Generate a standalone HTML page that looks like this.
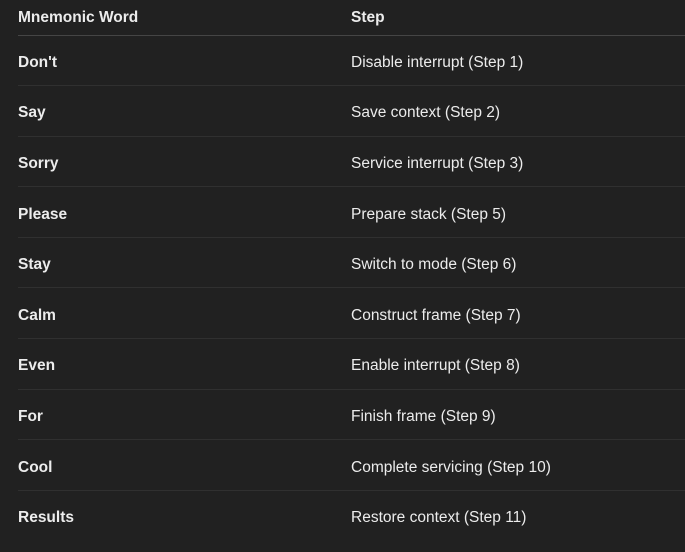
<!DOCTYPE html><html><head><style>
body{margin:0;background:#212121;width:685px;height:552px;overflow:hidden;font-family:"Liberation Sans",sans-serif;font-size:15.5px;color:#ececec}
table{position:absolute;left:18px;top:0;width:667px;border-collapse:collapse}
td,th{padding:0;text-align:left;vertical-align:middle}
th{height:35px;font-weight:bold;border-bottom:1px solid #454545;padding-top:2px;box-sizing:border-box}
td{height:50.6px;border-bottom:1px solid #303030;padding-top:5px;box-sizing:border-box}
tr:last-child td{border-bottom:none}
td:first-child{font-weight:bold;width:333px}
</style></head><body><table>
<tr><th>Mnemonic Word</th><th>Step</th></tr>
<tr><td>Don't</td><td>Disable interrupt (Step 1)</td></tr>
<tr><td>Say</td><td>Save context (Step 2)</td></tr>
<tr><td>Sorry</td><td>Service interrupt (Step 3)</td></tr>
<tr><td>Please</td><td>Prepare stack (Step 5)</td></tr>
<tr><td>Stay</td><td>Switch to mode (Step 6)</td></tr>
<tr><td>Calm</td><td>Construct frame (Step 7)</td></tr>
<tr><td>Even</td><td>Enable interrupt (Step 8)</td></tr>
<tr><td>For</td><td>Finish frame (Step 9)</td></tr>
<tr><td>Cool</td><td>Complete servicing (Step 10)</td></tr>
<tr><td>Results</td><td>Restore context (Step 11)</td></tr>
</table></body></html>
